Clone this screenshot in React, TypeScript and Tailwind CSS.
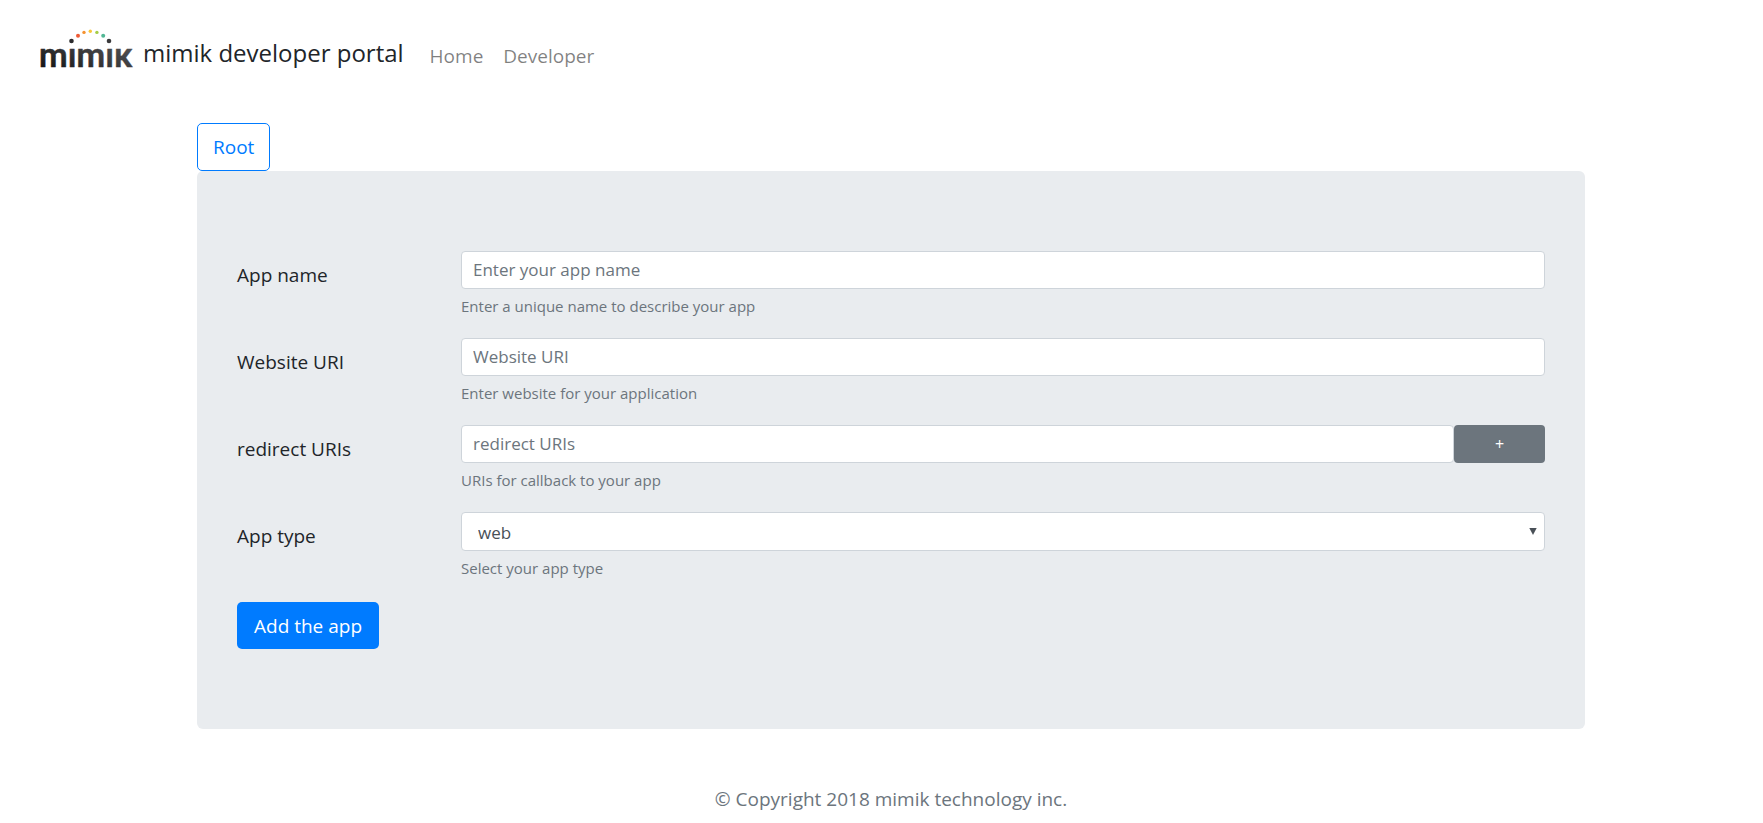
import type { ReactNode } from "react";

function Logo() {
  return (
    <svg role="img" aria-label="mimik" viewBox="0 0 92 40" className="h-10 w-[92px] shrink-0 overflow-visible">
      <defs>
        <linearGradient id="ink" x1="0" y1="1" x2="1" y2="0">
          <stop offset="0" stopColor="#0c0c0c" />
          <stop offset="0.55" stopColor="#3c3c3e" />
          <stop offset="1" stopColor="#5a5a5c" />
        </linearGradient>
      </defs>
      <text
        x="-1"
        y="38.5"
        fontSize="33"
        fontWeight="600"
        fill="url(#ink)"
        stroke="url(#ink)"
        strokeWidth="0.4"
        strokeLinejoin="round"
        fontFamily="Roboto, 'Liberation Sans', sans-serif"
      >
        mımıĸ
      </text>
      <circle cx="31.5" cy="13" r="2.3" fill="#2b2b2d" />
      <circle cx="69" cy="13" r="2.3" fill="#3a3a3c" />
      <circle cx="38" cy="7.7" r="2" fill="#ee5a35" />
      <circle cx="44" cy="4.4" r="1.7" fill="#f5922f" />
      <circle cx="50.3" cy="3.2" r="1.7" fill="#f8c73a" />
      <circle cx="56.9" cy="4.4" r="1.7" fill="#a5cd45" />
      <circle cx="63.2" cy="7.7" r="2" fill="#52b795" />
    </svg>
  );
}

const field =
  "block h-[38px] w-full rounded-sm border border-[#ced4da] bg-white px-[11px] text-[17px] leading-6 text-[#495057] placeholder:text-[#6c757d]";

type RowProps = { id: string; label: string; help: string; children: ReactNode };

function Row({ id, label, help, children }: RowProps) {
  return (
    <div className="grid grid-cols-[194px_1fr] gap-x-[30px]">
      <label htmlFor={id} className="pt-[9px] text-[19px] leading-[30px]">
        {label}
      </label>
      <div>
        {children}
        <small id={`${id}-help`} className="mt-[5px] block text-[15px] leading-6 text-[#6c757d]">
          {help}
        </small>
      </div>
    </div>
  );
}

export default function App() {
  return (
    <div className="min-h-screen bg-white font-['Open_Sans','Noto_Sans',sans-serif] text-[#212529]">
      <nav className="flex items-center px-10 pt-[26px]">
        <a href="#" className="flex items-center gap-[11px] text-2xl">
          <Logo />
          <span className="pt-[9px]">mimik developer portal</span>
        </a>
        <div className="ml-[26px] flex gap-5 pt-4 text-[19px] text-black/50">
          <a href="#home">Home</a>
          <a href="#developer">Developer</a>
        </div>
      </nav>

      <main className="pt-[52px] pr-[178px] pl-[197px]">
        <button
          type="button"
          className="block h-12 rounded-[5px] border border-[#007bff] px-[15px] pt-[2px] text-[19px] text-[#007bff]"
        >
          Root
        </button>
        <form className="rounded-md bg-[#e9ecef] px-10 py-20">
          <div className="flex flex-col gap-5">
            <Row id="app-name" label="App name" help="Enter a unique name to describe your app">
              <input id="app-name" aria-describedby="app-name-help" className={field} placeholder="Enter your app name" />
            </Row>
            <Row id="website" label="Website URI" help="Enter website for your application">
              <input id="website" aria-describedby="website-help" className={field} placeholder="Website URI" />
            </Row>
            <Row id="redirect" label="redirect URIs" help="URIs for callback to your app">
              <div className="flex">
                <input id="redirect" aria-describedby="redirect-help" className={field} placeholder="redirect URIs" />
                <button
                  type="button"
                  aria-label="Add redirect URI"
                  className="w-[91px] shrink-0 rounded-sm bg-[#6c757d] text-base text-white"
                >
                  +
                </button>
              </div>
            </Row>
            <Row id="app-type" label="App type" help="Select your app type">
              <div className="relative">
                <select
                  id="app-type"
                  aria-describedby="app-type-help"
                  className="block h-[39px] w-full appearance-none rounded-sm border border-[#ced4da] bg-white px-4 pt-[3px] text-[17px] text-[#495057]"
                >
                  <option>web</option>
                </select>
                <svg viewBox="0 0 8 7" className="pointer-events-none absolute top-4 right-2 h-[7px] w-2" aria-hidden="true">
                  <path d="M0.3 0h7.4L4 7z" fill="#495057" />
                </svg>
              </div>
            </Row>
          </div>
          <button type="submit" className="mt-[22px] block h-[47px] rounded-[5px] bg-[#007bff] px-[17px] pt-[3px] text-[19px] font-medium text-white">
            Add the app
          </button>
        </form>
        <footer className="pt-[55px] text-center text-[19px] leading-[30px] text-[#6c757d]">
          © Copyright 2018 mimik technology inc.
        </footer>
      </main>
    </div>
  );
}
